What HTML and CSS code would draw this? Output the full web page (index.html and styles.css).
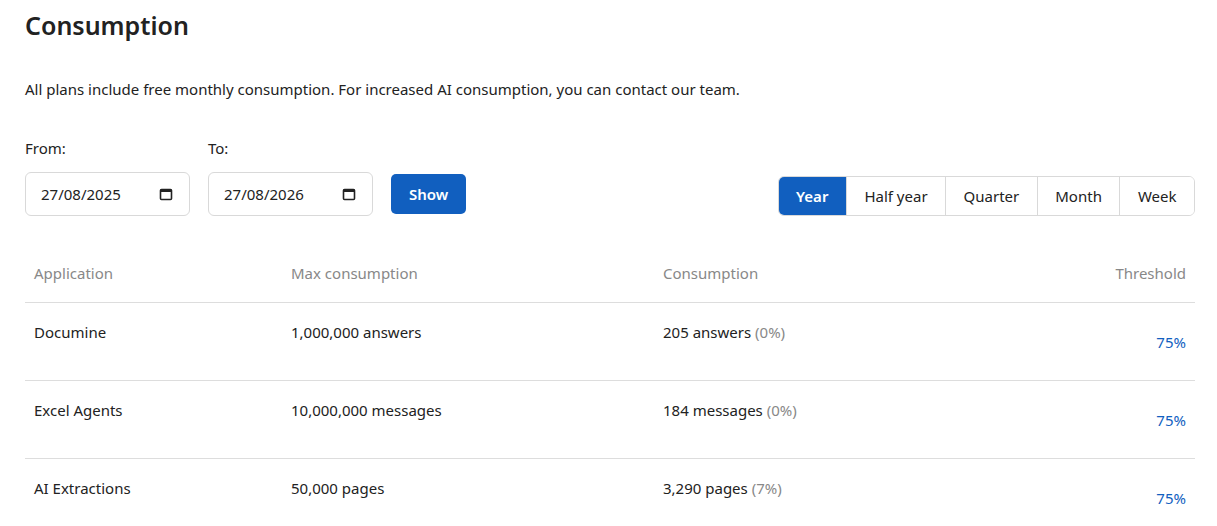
FILE: index.html
```html
<!DOCTYPE html>
<html lang="en">
<head>
    <meta charset="UTF-8">
    <meta name="viewport" content="width=device-width, initial-scale=1.0">
    <title>Consumption</title>
    <link rel="stylesheet" href="styles.css">
</head>
<body>
    <div class="page">
        <h1>Consumption</h1>
        <p class="intro">All plans include free monthly consumption. For increased AI consumption, you can contact our team.</p>

        <div class="filters">
            <div class="field">
                <label for="from">From:</label>
                <div class="date-input">
                    <span>27/08/2025</span>
                    <svg width="14" height="14" viewBox="0 0 14 14"><rect x="1.5" y="2.5" width="11" height="10" rx="1" fill="none" stroke="#222" stroke-width="1.6"/><rect x="1.5" y="2.5" width="11" height="2.5" fill="#222"/></svg>
                </div>
            </div>
            <div class="field">
                <label for="to">To:</label>
                <div class="date-input">
                    <span>27/08/2026</span>
                    <svg width="14" height="14" viewBox="0 0 14 14"><rect x="1.5" y="2.5" width="11" height="10" rx="1" fill="none" stroke="#222" stroke-width="1.6"/><rect x="1.5" y="2.5" width="11" height="2.5" fill="#222"/></svg>
                </div>
            </div>
            <button class="btn-show">Show</button>

            <div class="periods">
                <button class="period active">Year</button>
                <button class="period">Half year</button>
                <button class="period">Quarter</button>
                <button class="period">Month</button>
                <button class="period">Week</button>
            </div>
        </div>

        <div class="usage">
            <div class="row head">
                <div>Application</div>
                <div>Max consumption</div>
                <div>Consumption</div>
                <div class="threshold">Threshold</div>
            </div>
            <div class="row">
                <div>Documine</div>
                <div>1,000,000 answers</div>
                <div>205 answers <span class="pct">(0%)</span></div>
                <div class="threshold">75%</div>
            </div>
            <div class="row">
                <div>Excel Agents</div>
                <div>10,000,000 messages</div>
                <div>184 messages <span class="pct">(0%)</span></div>
                <div class="threshold">75%</div>
            </div>
            <div class="row">
                <div>AI Extractions</div>
                <div>50,000 pages</div>
                <div>3,290 pages <span class="pct">(7%)</span></div>
                <div class="threshold">75%</div>
            </div>
        </div>
    </div>
</body>
</html>
```

FILE: styles.css
```css
body {
    margin: 0;
    font-family: "Noto Sans", "Open Sans", sans-serif;
    font-size: 15px;
    color: #222;
    background: #fff;
}
.page {
    padding: 0 22px 0 25px;
}
h1 {
    margin: 0;
    padding-top: 7px;
    font-size: 25px;
    font-weight: 600;
    line-height: 36px;
}
.intro {
    margin: 35px 0 0;
    line-height: 22px;
}
.filters {
    display: flex;
    align-items: flex-end;
    margin-top: 37px;
}
.field {
    display: flex;
    flex-direction: column;
    margin-right: 18px;
}
.field label {
    line-height: 22px;
    margin-bottom: 13px;
}
.date-input {
    width: 165px;
    height: 44px;
    box-sizing: border-box;
    border: 1px solid #d9d9d9;
    border-radius: 6px;
    display: flex;
    align-items: center;
    justify-content: space-between;
    padding: 0 16px 0 15px;
}
.btn-show {
    height: 40px;
    margin-bottom: 2px;
    padding: 0 18px;
    border: none;
    border-radius: 5px;
    background: #115fbf;
    color: white;
    font: inherit;
    font-weight: 600;
}
.periods {
    display: flex;
    margin-left: auto;
    border: 1px solid #d9d9d9;
    border-radius: 6px;
    overflow: hidden;
}
.period {
    height: 38px;
    padding: 0 17.5px;
    border: none;
    border-left: 1px solid #d9d9d9;
    background: white;
    color: #222;
    font: inherit;
}
.period:first-child {
    border-left: none;
}
.period.active {
    background: #115fbf;
    color: white;
    font-weight: 600;
}
.usage {
    margin-top: 34px;
}
.row {
    display: grid;
    grid-template-columns: 257px 372px 1fr 160px;
    min-height: 77px;
    border-top: 1px solid #ddd;
}
.row > div {
    padding: 18px 9px 0;
    line-height: 22px;
}
.row > .threshold {
    text-align: right;
    padding-top: 28px;
    color: #1160c0;
}
.row.head {
    border-top: none;
    min-height: 0;
    height: 52px;
    border-bottom: 1px solid #ddd;
    margin-bottom: -1px;
}
.row.head > div {
    padding-top: 12px;
    color: #888;
}
.row.head > .threshold {
    color: #888;
}
.pct {
    color: #888;
}
```
